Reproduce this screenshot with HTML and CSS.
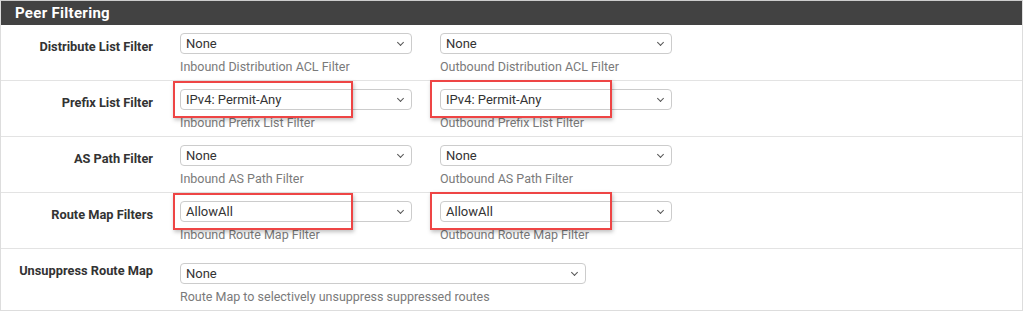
FILE: index.html
```html
<!DOCTYPE html>
<html>

<head>
    <meta charset="UTF-8">
    <title>Peer Filtering</title>
    <link rel="stylesheet" href="styles.css">
</head>

<body>
    <div class="painel">
        <div class="painel-titulo">Peer Filtering</div>

        <div class="linha">
            <div class="rotulo">Distribute List Filter</div>
            <div class="campo">
                <div class="caixa"><span>None</span><i class="seta"></i></div>
                <div class="ajuda">Inbound Distribution ACL Filter</div>
            </div>
            <div class="campo">
                <div class="caixa"><span>None</span><i class="seta"></i></div>
                <div class="ajuda">Outbound Distribution ACL Filter</div>
            </div>
        </div>

        <div class="linha">
            <div class="rotulo">Prefix List Filter</div>
            <div class="campo">
                <div class="caixa"><span>IPv4: Permit-Any</span><i class="seta"></i></div>
                <div class="ajuda">Inbound Prefix List Filter</div>
                <div class="destaque"></div>
            </div>
            <div class="campo">
                <div class="caixa"><span>IPv4: Permit-Any</span><i class="seta"></i></div>
                <div class="ajuda">Outbound Prefix List Filter</div>
                <div class="destaque destaque-dir"></div>
            </div>
        </div>

        <div class="linha">
            <div class="rotulo">AS Path Filter</div>
            <div class="campo">
                <div class="caixa"><span>None</span><i class="seta"></i></div>
                <div class="ajuda">Inbound AS Path Filter</div>
            </div>
            <div class="campo">
                <div class="caixa"><span>None</span><i class="seta"></i></div>
                <div class="ajuda">Outbound AS Path Filter</div>
            </div>
        </div>

        <div class="linha">
            <div class="rotulo">Route Map Filters</div>
            <div class="campo">
                <div class="caixa"><span>AllowAll</span><i class="seta"></i></div>
                <div class="ajuda">Inbound Route Map Filter</div>
                <div class="destaque"></div>
            </div>
            <div class="campo">
                <div class="caixa"><span>AllowAll</span><i class="seta"></i></div>
                <div class="ajuda">Outbound Route Map Filter</div>
                <div class="destaque destaque-dir"></div>
            </div>
        </div>

        <div class="linha linha-ultima">
            <div class="rotulo">Unsuppress Route Map</div>
            <div class="campo campo-largo">
                <div class="caixa"><span>None</span><i class="seta"></i></div>
                <div class="ajuda">Route Map to selectively unsuppress suppressed routes</div>
            </div>
        </div>
    </div>
</body>

</html>
```

FILE: styles.css
```css
* {
    box-sizing: border-box;
}

body {
    margin: 0;
    background-color: #fff;
    font-family: Roboto, "Liberation Sans", sans-serif;
    font-size: 12px;
    color: #333;
}

.painel {
    width: 1023px;
    height: 311px;
    border: 1px solid #ddd;
    border-top-color: #ccc;
    overflow: hidden;
}

.painel-titulo {
    height: 24px;
    background-color: #424242;
    color: #fff;
    font-size: 15px;
    font-weight: 700;
    padding: 3px 0 0 14px;
    letter-spacing: .3px;
}

.linha {
    display: flex;
    height: 56px;
    border-bottom: 1px solid #e3e3e3;
}

.linha-ultima {
    height: 62px;
    border-bottom: 1px solid #ddd;
}

.rotulo {
    width: 152px;
    text-align: right;
    font-size: 12.8px;
    font-weight: 700;
    padding-top: 14px;
    line-height: 16px;
    color: #333;
}

.campo {
    position: relative;
    width: 232px;
    margin-left: 27px;
    padding-top: 8px;
}

.campo + .campo {
    margin-left: 28px;
}

.campo-largo {
    width: 406px;
}

.linha-ultima .campo {
    padding-top: 14px;
}

.caixa {
    display: flex;
    align-items: center;
    justify-content: space-between;
    height: 21px;
    border: 1px solid #ccc;
    border-radius: 4px;
    padding: 0 8px 0 5px;
    font-size: 13px;
    color: #333;
}

.seta {
    width: 5px;
    height: 5px;
    border-right: 1.3px solid #555;
    border-bottom: 1.3px solid #555;
    transform: rotate(45deg);
    margin-top: -3px;
}

.ajuda {
    margin-top: 6px;
    line-height: 14px;
    font-size: 12.5px;
    color: #7a7a7a;
}

.destaque {
    position: absolute;
    left: -7px;
    top: 0;
    width: 180px;
    height: 37px;
    border: 2.5px solid #ee4545;
    box-shadow: 1px 2px 4px rgba(0, 0, 0, .25);
}

.destaque-dir {
    left: -10px;
    top: -1px;
    width: 182px;
    height: 38px;
}
```
